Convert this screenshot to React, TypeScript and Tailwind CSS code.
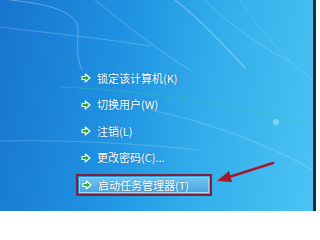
import React from "react";

// ── Green "go" arrow next to each option ─────────────────────────────────

function GoArrow() {
  return (
    <svg width="10" height="10" viewBox="0 0 10 10" className="shrink-0">
      <path
        d="M1 3.5 H4.3 V1 L9 5 L4.3 9 V6.5 H1 Z"
        fill="#22b02a"
        stroke="#ffffff"
        strokeWidth="1.1"
        strokeLinejoin="round"
      />
    </svg>
  );
}

function Option({ label }: { label: string }) {
  return (
    <div className="flex h-[26.5px] items-center gap-[6px] pl-[5px]">
      <GoArrow />
      <span className="text-[11px] leading-none text-white [text-shadow:0_0_2px_rgba(0,40,90,0.45)]">
        {label}
      </span>
    </div>
  );
}

// ── Wallpaper streaks ─────────────────────────────────────────────────────

function Streaks() {
  return (
    <svg
      className="pointer-events-none absolute inset-0"
      width="313"
      height="211"
      viewBox="0 0 313 211"
      fill="none"
    >
      <g stroke="#ffffff" strokeLinecap="round">
        <path d="M10 0 C50 4 78 12 78 30 C78 45 76 58 82 70" strokeOpacity="0.3" strokeWidth="1" />
        <path d="M0 27 C40 32 100 38 150 46" strokeOpacity="0.22" strokeWidth="1" />
        <path d="M95 0 C120 20 150 45 190 70" strokeOpacity="0.25" strokeWidth="1" />
        <path d="M175 0 C195 15 215 35 245 68" strokeOpacity="0.3" strokeWidth="1.2" />
        <path d="M205 0 C225 20 250 40 290 62" strokeOpacity="0.2" strokeWidth="1" />
        <path d="M0 141 C60 140 120 142 200 150" strokeOpacity="0.2" strokeWidth="1" />
        <path d="M150 110 C200 120 260 140 313 170" strokeOpacity="0.15" strokeWidth="1.5" />
        <path d="M240 0 C260 30 285 60 313 80" strokeOpacity="0.15" strokeWidth="1" />
      </g>
      <path d="M60 87 C130 90 220 100 313 126" stroke="#38c8a0" strokeOpacity="0.45" strokeWidth="1.2" />
      <circle cx="276" cy="122" r="3" fill="#ffffff" fillOpacity="0.35" />
    </svg>
  );
}

export default function App() {
  return (
    <div
      className="flex h-[211px] w-[316px] overflow-hidden"
      style={{ fontFamily: '"Noto Sans CJK SC", "Noto Sans", sans-serif' }}
    >
      <div className="relative flex-1 bg-[linear-gradient(100deg,#1874cf_0%,#1e90e1_35%,#33aeeb_65%,#4bc3f3_100%)]">
        <Streaks />

        <div className="relative flex flex-col pl-[76px] pt-[65px]">
          <Option label="锁定该计算机(K)" />
          <Option label="切换用户(W)" />
          <Option label="注销(L)" />
          <Option label="更改密码(C)..." />

          {/* highlighted option, outlined in red */}
          <div className="mt-[3px] h-[22px] w-[136px] border-2 border-[#7e2038] p-px">
            <div className="flex h-full items-center gap-[6px] border border-white/40 bg-[linear-gradient(180deg,#6ec3ee_0%,#48a6e0_100%)] pl-[2px]">
              <GoArrow />
              <span className="text-[11px] leading-none text-white [text-shadow:0_0_2px_rgba(0,40,90,0.45)]">
                启动任务管理器(T)
              </span>
            </div>
          </div>
        </div>

        {/* red annotation arrow */}
        <svg
          className="pointer-events-none absolute left-0 top-0"
          width="313"
          height="211"
          viewBox="0 0 313 211"
          fill="none"
        >
          <path d="M273 163 L229 177" stroke="#a5192b" strokeWidth="2.6" strokeLinecap="round" />
          <path d="M217 181 L229 171 L232 182 Z" fill="#a5192b" />
        </svg>
      </div>
      <div className="w-[3px] bg-[#1e2c3a]" />
    </div>
  );
}
